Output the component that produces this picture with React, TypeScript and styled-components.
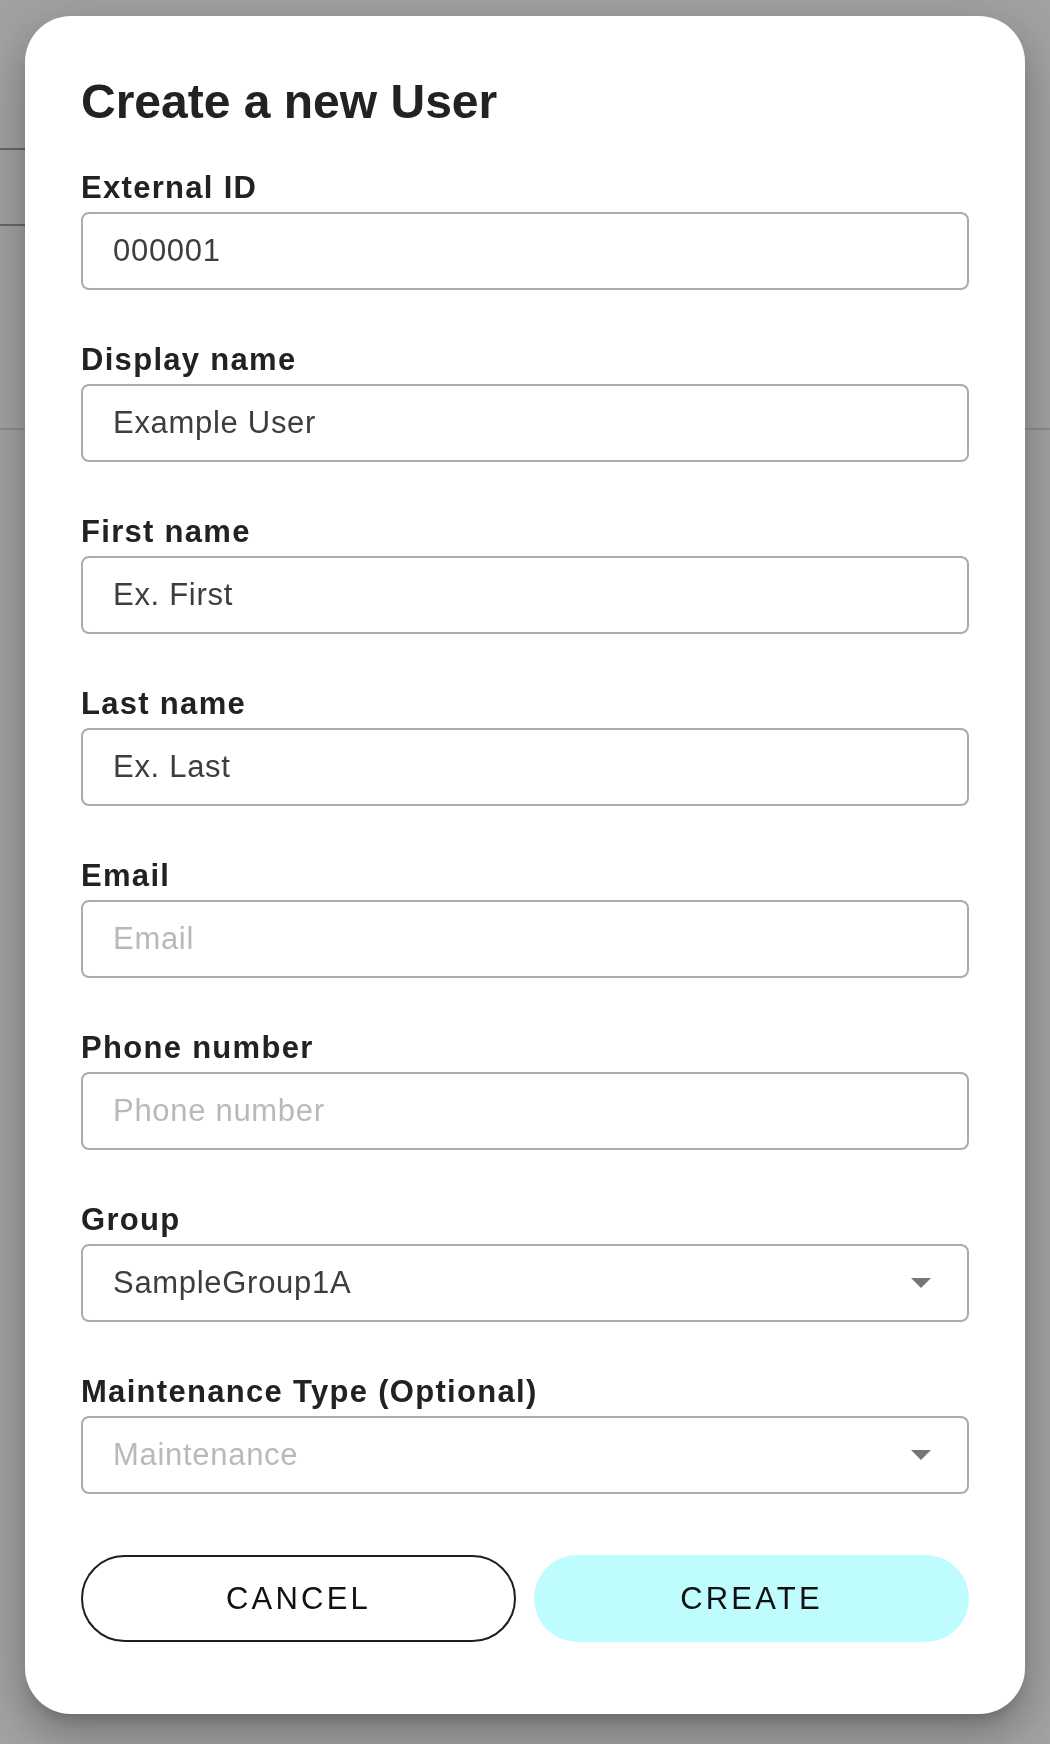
import React from 'react';
import styled, { createGlobalStyle } from 'styled-components';

const GlobalStyle = createGlobalStyle`
  html, body {
    margin: 0;
    padding: 0;
    background: #ffffff;
  }
  body {
    font-family: "Liberation Sans", Arial, Helvetica, sans-serif;
    -webkit-font-smoothing: antialiased;
  }
  * {
    box-sizing: border-box;
  }
`;

const BgPage = styled.div`
  height: 1744px;
  background: #ffffff;
`;

const BgList = styled.div`
  width: 50%;
`;

const BgRow = styled.div<{ $height: number }>`
  height: ${(p) => p.$height}px;
  border-bottom: 2px solid #a3a3a3;
`;

const BgDivider = styled.div`
  margin-top: 202px;
  height: 2px;
  background: #dedede;
`;

const Backdrop = styled.div`
  position: fixed;
  inset: 0;
  background: rgba(0, 0, 0, 0.37);
  display: flex;
  justify-content: center;
  align-items: flex-start;
  padding-top: 16px;
`;

const Dialog = styled.div`
  width: 1000px;
  background: #ffffff;
  border-radius: 46px;
  padding: 58px 56px 72px;
  box-shadow: 0px 11px 15px -7px rgba(0, 0, 0, 0.2),
    0px 24px 38px 3px rgba(0, 0, 0, 0.14), 0px 9px 46px 8px rgba(0, 0, 0, 0.12);
`;

const Title = styled.h2`
  margin: 0 0 40px;
  font-size: 48px;
  line-height: 56px;
  font-weight: 700;
  color: #222222;
`;

const Form = styled.form`
  display: flex;
  flex-direction: column;
  gap: 52px;
`;

const Field = styled.div`
  display: flex;
  flex-direction: column;
  gap: 6px;
`;

const Label = styled.label`
  font-size: 31px;
  line-height: 36px;
  font-weight: 700;
  letter-spacing: 1.3px;
  color: #222222;
`;

const Input = styled.input`
  width: 100%;
  height: 78px;
  margin: 0;
  padding: 0 30px;
  border: 2px solid #ababab;
  border-radius: 8px;
  background: #ffffff;
  font-family: inherit;
  font-size: 31px;
  letter-spacing: 0.7px;
  color: #3d3d3d;
  outline: none;

  &::placeholder {
    color: #b9b9b9;
    opacity: 1;
  }
`;

const Select = styled.div`
  height: 78px;
  padding: 0 36px 0 30px;
  border: 2px solid #ababab;
  border-radius: 8px;
  display: flex;
  align-items: center;
  justify-content: space-between;
  font-size: 31px;
  letter-spacing: 0.7px;
`;

const SelectValue = styled.span<{ $placeholder?: boolean }>`
  color: ${(p) => (p.$placeholder ? '#b9b9b9' : '#3d3d3d')};
`;

const Caret = () => (
  <svg width="20" height="10" viewBox="0 0 20 10">
    <path d="M0 0 L20 0 L10 10 Z" fill="#757575" />
  </svg>
);

const Actions = styled.div`
  margin-top: 61px;
  display: grid;
  grid-template-columns: 1fr 1fr;
  gap: 18px;
`;

const Button = styled.button<{ $primary?: boolean }>`
  height: 87px;
  border-radius: 44px;
  border: ${(p) => (p.$primary ? 'none' : '2px solid #1e1e1e')};
  background: ${(p) => (p.$primary ? '#bffcfd' : '#ffffff')};
  font-family: inherit;
  font-size: 31px;
  font-weight: 400;
  letter-spacing: 3.2px;
  text-transform: uppercase;
  color: #111111;
  cursor: pointer;
`;

const textFields = [
  { label: 'External ID', value: '000001', placeholder: '' },
  { label: 'Display name', value: 'Example User', placeholder: '' },
  { label: 'First name', value: 'Ex. First', placeholder: '' },
  { label: 'Last name', value: 'Ex. Last', placeholder: '' },
  { label: 'Email', value: '', placeholder: 'Email' },
  { label: 'Phone number', value: '', placeholder: 'Phone number' },
];

const App: React.FC = () => {
  return (
    <>
      <GlobalStyle />
      <BgPage>
        <BgList>
          <BgRow $height={150} />
          <BgRow $height={76} />
        </BgList>
        <BgDivider />
      </BgPage>
      <Backdrop>
        <Dialog>
          <Title>Create a new User</Title>
          <Form onSubmit={(e) => e.preventDefault()}>
            {textFields.map((f) => (
              <Field key={f.label}>
                <Label>{f.label}</Label>
                <Input defaultValue={f.value} placeholder={f.placeholder} />
              </Field>
            ))}
            <Field>
              <Label>Group</Label>
              <Select>
                <SelectValue>SampleGroup1A</SelectValue>
                <Caret />
              </Select>
            </Field>
            <Field>
              <Label>Maintenance Type (Optional)</Label>
              <Select>
                <SelectValue $placeholder>Maintenance</SelectValue>
                <Caret />
              </Select>
            </Field>
          </Form>
          <Actions>
            <Button type="button">Cancel</Button>
            <Button type="button" $primary>
              Create
            </Button>
          </Actions>
        </Dialog>
      </Backdrop>
    </>
  );
};

export default App;
